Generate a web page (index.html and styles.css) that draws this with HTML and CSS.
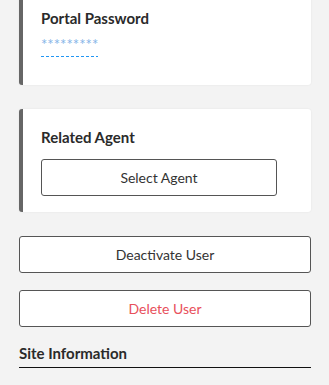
FILE: index.html
```html
<!DOCTYPE html>
<html lang="en">
<head>
  <meta charset="UTF-8">
  <meta name="viewport" content="width=device-width, initial-scale=1.0">
  <title>User Settings</title>
  <link rel="stylesheet" href="styles.css">
</head>
<body>
  <div class="page">
    <div class="card card-first">
      <h3 class="card-title">Portal Password</h3>
      <span class="password-link">*********</span>
    </div>

    <div class="card">
      <h3 class="card-title">Related Agent</h3>
      <button class="btn btn-select">Select Agent</button>
    </div>

    <button class="btn btn-wide">Deactivate User</button>
    <button class="btn btn-wide btn-danger">Delete User</button>

    <h3 class="section-title">Site Information</h3>
  </div>
</body>
</html>
```

FILE: styles.css
```css
body {
  margin: 0;
  background-color: #f3f3f3;
  font-family: Lato, "Noto Sans", sans-serif;
  color: #222;
}

.page {
  padding: 0 18px 0 19px;
  margin-top: -12px;
}

.card {
  background-color: #fff;
  border-left: 4px solid #666;
  border-radius: 3px;
  box-shadow: 0 0 2px rgba(0, 0, 0, 0.08);
  padding: 18px 18px 16px 18px;
  margin-bottom: 24px;
}

.card-first {
  padding-top: 20px;
  padding-bottom: 28px;
}

.card-title {
  margin: 0 0 12px 0;
  font-size: 15px;
  font-weight: bold;
  line-height: 20px;
  color: #2a2a2a;
}

.card-first .card-title {
  margin-bottom: 6px;
}

.password-link {
  display: inline-block;
  color: #86b5e8;
  font-size: 15px;
  line-height: 16px;
  height: 16px;
  padding-bottom: 5px;
  background-image: repeating-linear-gradient(to right, #2196f3 0, #2196f3 3px, transparent 3px, transparent 5px);
  background-size: 100% 1px;
  background-position: left bottom;
  background-repeat: no-repeat;
}

.btn {
  display: block;
  height: 37px;
  background-color: #fff;
  border: 1px solid #555;
  border-radius: 3px;
  font-family: Lato, "Noto Sans", sans-serif;
  font-size: 14px;
  color: #333;
  padding: 0;
}

.btn-select {
  width: 236px;
}

.btn-wide {
  width: 100%;
  margin-bottom: 17px;
}

.btn-danger {
  color: #e8505b;
  margin-bottom: 16px;
}

.section-title {
  margin: 0;
  padding-bottom: 4px;
  border-bottom: 1px solid #111;
  font-size: 15px;
  font-weight: bold;
  line-height: 20px;
  color: #2a2a2a;
}
```
